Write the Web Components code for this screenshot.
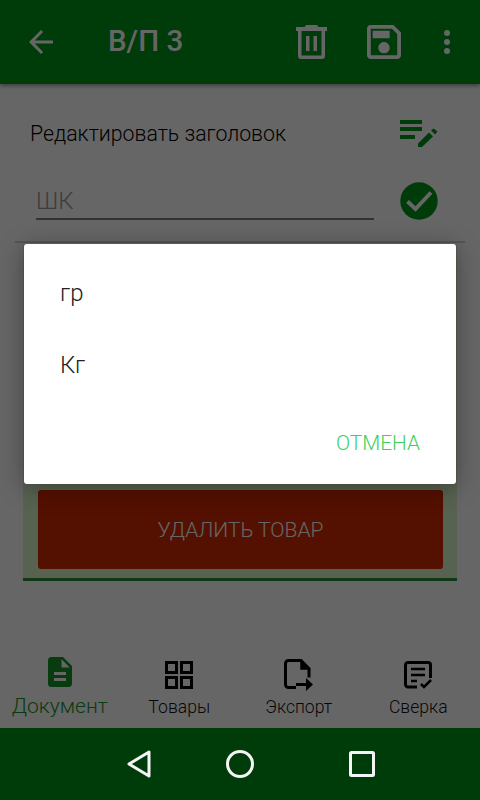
<!DOCTYPE html>
<html lang="ru">
<head>
<meta charset="utf-8">
<title>В/П 3</title>
<style>
  html, body { margin: 0; padding: 0; }
  body { width: 480px; height: 800px; overflow: hidden; font-family: Roboto, "Noto Sans", sans-serif; background: #fff; }
</style>
</head>
<body>
<app-screen>
  <tool-bar slot="top" title="В/П 3"></tool-bar>
  <doc-form slot="body"></doc-form>
  <tab-bar slot="tabs"></tab-bar>
  <choice-dialog slot="dialog">
    <choice-item>гр</choice-item>
    <choice-item>Кг</choice-item>
  </choice-dialog>
  <nav-bar slot="nav"></nav-bar>
</app-screen>

<script>
// small helper, every element has the same shadow setup
const shadowOf = (el, html) => {
  const root = el.attachShadow({ mode: 'open' });
  root.innerHTML = html;
  return root;
};

class AppScreen extends HTMLElement {
  constructor() {
    super();
    shadowOf(this, `
    <style>
      :host { display: flex; flex-direction: column; width: 480px; height: 800px; }
      .app { position: relative; flex: 1; display: flex; flex-direction: column; min-height: 0; }
      .main { flex: 1; display: flex; flex-direction: column; min-height: 0; }
      .scrim { position: absolute; inset: 0; background: rgba(0,0,0,.6); }
      .center { position: absolute; left: 24px; top: 244px; }
    </style>
    <div class="app">
      <slot name="top"></slot>
      <div class="main"><slot name="body"></slot></div>
      <slot name="tabs"></slot>
      <div class="scrim"></div>
      <div class="center"><slot name="dialog"></slot></div>
    </div>
    <slot name="nav"></slot>`);
  }
}

class ToolBar extends HTMLElement {
  constructor() {
    super();
    shadowOf(this, `
    <style>
      :host { display: flex; align-items: center; height: 84px; flex: none; background: #009419; color: #fff;
        box-shadow: 0 2px 4px rgba(0,0,0,.4); position: relative; }
      svg { display: block; fill: currentColor; flex: none; }
      .back { margin-left: 29px; }
      h1 { margin: 0 0 0 55px; font: 500 29.500px/1 Roboto, sans-serif; flex: 1; }
      .save { margin-left: 40px; }
      .more { margin: 0 30px 0 43px; }
    </style>
    <svg class="back" width="24" height="24" viewBox="4 4 16 16"><path d="M20 11H7.830l5.590-5.590L12 4l-8 8 8 8 1.410-1.410L7.830 13H20v-2z"/></svg>
    <h1>${this.getAttribute('title')}</h1>
    <svg class="trash" width="31" height="34" viewBox="0 0 31 34"><path d="M10 0h11l1.500 2H31v4H0V2h8.500zM2 6h27v25a3 3 0 0 1-3 3H5a3 3 0 0 1-3-3zm3.500 0v24.500h20V6zM10 11h3.500v15H10zm7.500 0H21v15h-3.500z" fill-rule="evenodd"/></svg>
    <svg class="save" width="34" height="34" viewBox="3 3 18 18"><path d="M17 3H5c-1.110 0-2 .9-2 2v14c0 1.100.89 2 2 2h14c1.100 0 2-.9 2-2V7l-4-4zm2 16H5V5h11.170L19 7.830V19zm-7-7c-1.660 0-3 1.340-3 3s1.340 3 3 3 3-1.340 3-3-1.340-3-3-3zM6 6h9v4H6z"/></svg>
    <svg class="more" width="6" height="24" viewBox="0 0 6 24"><circle cx="3" cy="3" r="3"/><circle cx="3" cy="12" r="3"/><circle cx="3" cy="21" r="3"/></svg>`);
  }
}

class DocForm extends HTMLElement {
  constructor() {
    super();
    shadowOf(this, `
    <style>
      :host { display: flex; flex-direction: column; color: #000; }
      svg { display: block; flex: none; }
      .head { display: flex; align-items: center; justify-content: space-between; padding: 33px 42px 0 30px; height: 32px; font-size: 21.300px; font-weight: 300; }
      .code { display: flex; justify-content: space-between; align-items: flex-end; padding: 33px 42px 0 36px; }
      .field { width: 338px; height: 38px; box-sizing: border-box; border-bottom: 2px solid #7d7d7d; font-size: 24px; font-weight: 300; line-height: 38px; color: #999; }
      .rule { height: 2px; margin: 21px 15px 0; background: #d4d4d4; }
      .card { margin: 2px 23px 0; height: 336px; box-sizing: border-box; display: flex; align-items: flex-end;
        padding: 0 14px 9px 15px; background: #dcf5c8; border-bottom: 3px solid #2c8c34; }
      delete-button { flex: 1; }
    </style>
    <div class="head">
      <span>Редактировать заголовок</span>
      <svg width="38" height="28" viewBox="0 0 38 28" fill="#009419"><path d="M0 1h22v4H0zM0 8h22v4H0zM0 16h15v4H0z"/><path d="M18 24.500L29 13.500l4 4L22 28h-4zM31 11.500L33.500 9.500l4 3L35 15.500z"/></svg>
    </div>
    <div class="code">
      <div class="field">ШК</div>
      <svg width="38" height="38" viewBox="0 0 38 38"><circle cx="19" cy="19" r="18.700" fill="#009419"/><path d="M7.500 19.500l8 7.500 15.500-16.500" fill="none" stroke="#fff" stroke-width="4"/></svg>
    </div>
    <div class="rule"></div>
    <div class="card"><delete-button>Удалить товар</delete-button></div>`);
  }
}

class DeleteButton extends HTMLElement {
  constructor() {
    super();
    shadowOf(this, `
    <style>
      :host { display: flex; align-items: center; justify-content: center; height: 79px; border-radius: 3px;
        background: #d22900; color: #fff; font-size: 21px; font-weight: 300; text-transform: uppercase; }
    </style>
    <slot></slot>`);
  }
}

class TabBar extends HTMLElement {
  constructor() {
    super();
    shadowOf(this, `
    <style>
      :host { display: grid; grid-template-columns: repeat(4, 1fr); height: 88px; flex: none; padding-right: 2px; }
    </style>
    <tab-item active label="Документ">
      <svg width="24" height="30" viewBox="4 2 16 20" fill="currentColor"><path d="M14 2H6c-1.100 0-1.990.9-1.990 2L4 20c0 1.100.89 2 1.990 2H18c1.100 0 2-.9 2-2V8l-6-6zm2 16H8v-2h8v2zm0-4H8v-2h8v2zm-3-5V3.500L18.500 9H13z"/></svg>
    </tab-item>
    <tab-item label="Товары">
      <svg width="28" height="28" viewBox="0 0 28 28" fill="none" stroke="#000" stroke-width="3"><path d="M1.500 1.500h10v10h-10zM16.500 1.500h10v10h-10zM1.500 16.500h10v10h-10zM16.500 16.500h10v10h-10z"/></svg>
    </tab-item>
    <tab-item label="Экспорт">
      <svg width="30" height="32" viewBox="0 0 30 32" fill="none" stroke="#000" stroke-width="3"><path d="M12 28.500H4.500a3 3 0 0 1-3-3V4.500a3 3 0 0 1 3-3H17l8 8v9"/><path d="M17 2v8h8z" fill="#000" stroke-width="1.500"/><path d="M12 25.500h11" stroke-width="3"/><path d="M22 19l7 6.500-7 6.500z" fill="#000" stroke="none"/></svg>
    </tab-item>
    <tab-item label="Сверка">
      <svg width="28" height="28" viewBox="0 0 28 28" fill="none" stroke="#000" stroke-width="3"><path d="M13 26H4a2.500 2.500 0 0 1-2.500-2.500V4A2.500 2.500 0 0 1 4 1.500h20A2.500 2.500 0 0 1 26.500 4v13"/><path d="M7 8h14M7 14h14M7 20h6" stroke-width="2.500"/><path d="M17 23l3 3 7-7" stroke-width="2.500"/></svg>
    </tab-item>`);
  }
}

class TabItem extends HTMLElement {
  constructor() {
    super();
    shadowOf(this, `
    <style>
      :host { display: flex; flex-direction: column; align-items: center; justify-content: flex-end; color: #111; font-size: 17.600px; font-weight: 300; padding-bottom: 11px; box-sizing: border-box; }
      :host([active]) { color: #17942a; font-size: 21px; padding-bottom: 10px; }
      .ic { height: 36px; display: flex; align-items: center; margin-bottom: 4px; }
    </style>
    <div class="ic"><slot></slot></div>
    <span>${this.getAttribute('label')}</span>`);
  }
}

class ChoiceDialog extends HTMLElement {
  constructor() {
    super();
    shadowOf(this, `
    <style>
      :host { display: flex; flex-direction: column; width: 432px; height: 240px; background: #fff; border-radius: 3px;
        box-shadow: 0 4px 24px rgba(0,0,0,.35); box-sizing: border-box; padding-top: 13px; }
      .list { flex: 1; }
      .actions { display: flex; justify-content: flex-end; padding: 0 36px 29px 0; font-size: 20.800px; font-weight: 300; color: #3fd057; }
    </style>
    <div class="list"><slot></slot></div>
    <div class="actions">ОТМЕНА</div>`);
  }
}

class ChoiceItem extends HTMLElement {
  constructor() {
    super();
    shadowOf(this, `
    <style>
      :host { display: flex; align-items: center; height: 72px; padding-left: 36px; font-size: 24px; font-weight: 300; color: #222; }
    </style>
    <slot></slot>`);
  }
}

class NavBar extends HTMLElement {
  constructor() {
    super();
    shadowOf(this, `
    <style>
      :host { display: flex; align-items: center; height: 72px; flex: none; background: #003b0a; padding-left: 127px; box-sizing: border-box; }
      svg { display: block; fill: none; stroke: #f5f5f5; stroke-width: 3; stroke-linejoin: round; }
      .home { margin: 0 95px 0 75px; }
    </style>
    <svg width="24" height="28" viewBox="0 0 24 28"><path d="M22 2v24L2 14z"/></svg>
    <svg class="home" width="28" height="28" viewBox="0 0 28 28"><circle cx="14" cy="14" r="12.500"/></svg>
    <svg width="26" height="26" viewBox="0 0 26 26"><rect x="1.500" y="1.500" width="23" height="23" rx="1"/></svg>`);
  }
}

customElements.define('app-screen', AppScreen);
customElements.define('tool-bar', ToolBar);
customElements.define('doc-form', DocForm);
customElements.define('delete-button', DeleteButton);
customElements.define('tab-bar', TabBar);
customElements.define('tab-item', TabItem);
customElements.define('choice-dialog', ChoiceDialog);
customElements.define('choice-item', ChoiceItem);
customElements.define('nav-bar', NavBar);
</script>
</body>
</html>
